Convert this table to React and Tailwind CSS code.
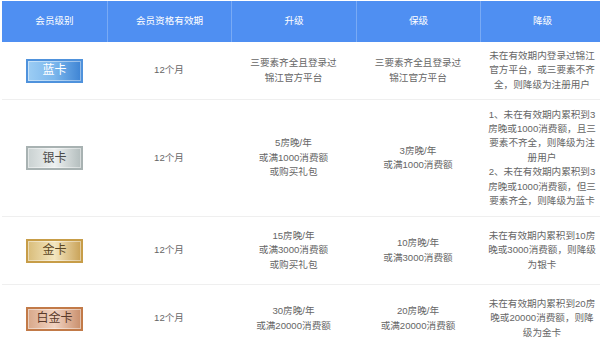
const headers = ["会员级别", "会员资格有效期", "升级", "保级", "降级"];

const rows = [
  {
    level: "蓝卡",
    badge:
      "bg-gradient-to-r from-[#9ccdf4] via-[#7ab6ec] to-[#3e84d4] border-[#4f92dc] text-white",
    height: "h-[58px]",
    upgrade: ["三要素齐全且登录过", "锦江官方平台"],
    keep: ["三要素齐全且登录过", "锦江官方平台"],
    downgrade: ["未在有效期内登录过锦江", "官方平台，或三要素不齐", "全，则降级为注册用户"],
  },
  {
    level: "银卡",
    badge:
      "bg-gradient-to-r from-[#c9d1d1] via-[#eef1f1] to-[#b3bdbd] border-[#a8b2b2] text-[#4a4a4a]",
    height: "h-[117px]",
    upgrade: ["5房晚/年", "或满1000消费额", "或购买礼包"],
    keep: ["3房晚/年", "或满1000消费额"],
    downgrade: [
      "1、未在有效期内累积到3",
      "房晚或1000消费额，且三",
      "要素不齐全，则降级为注",
      "册用户",
      "2、未在有效期内累积到3",
      "房晚或1000消费额，但三",
      "要素齐全，则降级为蓝卡",
    ],
  },
  {
    level: "金卡",
    badge:
      "bg-gradient-to-r from-[#d9bd7a] via-[#f3e6bf] to-[#c9a256] border-[#c79d48] text-[#5b4622]",
    height: "h-[68px]",
    upgrade: ["15房晚/年", "或满3000消费额", "或购买礼包"],
    keep: ["10房晚/年", "或满3000消费额"],
    downgrade: ["未在有效期内累积到10房", "晚或3000消费额，则降级", "为银卡"],
  },
  {
    level: "白金卡",
    badge:
      "bg-gradient-to-r from-[#d8a88a] via-[#f1d3c2] to-[#c98f6c] border-[#c27a48] text-[#5a3a2a]",
    height: "h-[68px]",
    upgrade: ["30房晚/年", "或满20000消费额"],
    keep: ["20房晚/年", "或满20000消费额"],
    downgrade: ["未在有效期内累积到20房", "晚或20000消费额，则降", "级为金卡"],
  },
];

function Lines({ lines }) {
  return (
    <div className="text-center">
      {lines.map((line, i) => (
        <div key={i}>{line}</div>
      ))}
    </div>
  );
}

export default function App() {
  return (
    <div
      className="w-[600px] h-[350px] overflow-hidden bg-white pl-[2px] pt-[1px] text-[9.6px] leading-[14.4px] text-[#666666]"
      style={{ fontFamily: '"Liberation Sans", "Noto Sans CJK SC", sans-serif' }}
    >
      <div className="w-[602px]">
        <div className="grid grid-cols-[105px_124px_125px_124px_124px] h-[41px] bg-[#4f8ff2] text-white">
          {headers.map((h, i) => (
            <div
              key={h}
              className={`flex items-center justify-center ${
                i > 0 ? "border-l border-[#79aaf5]" : ""
              }`}
            >
              {h}
            </div>
          ))}
        </div>
        {rows.map((row) => (
          <div
            key={row.level}
            className={`grid grid-cols-[105px_124px_125px_124px_124px] border-b border-[#efefef] ${row.height}`}
          >
            <div className="flex items-center justify-center">
              <div
                className={`w-[57px] h-[24px] flex items-center justify-center border-2 text-[12px] shadow-[inset_0_0_0_1px_rgba(255,255,255,0.45)] ${row.badge}`}
              >
                {row.level}
              </div>
            </div>
            <div className="flex items-center justify-center">12个月</div>
            <div className="flex items-center justify-center">
              <Lines lines={row.upgrade} />
            </div>
            <div className="flex items-center justify-center">
              <Lines lines={row.keep} />
            </div>
            <div className="flex items-center justify-center">
              <Lines lines={row.downgrade} />
            </div>
          </div>
        ))}
      </div>
    </div>
  );
}
